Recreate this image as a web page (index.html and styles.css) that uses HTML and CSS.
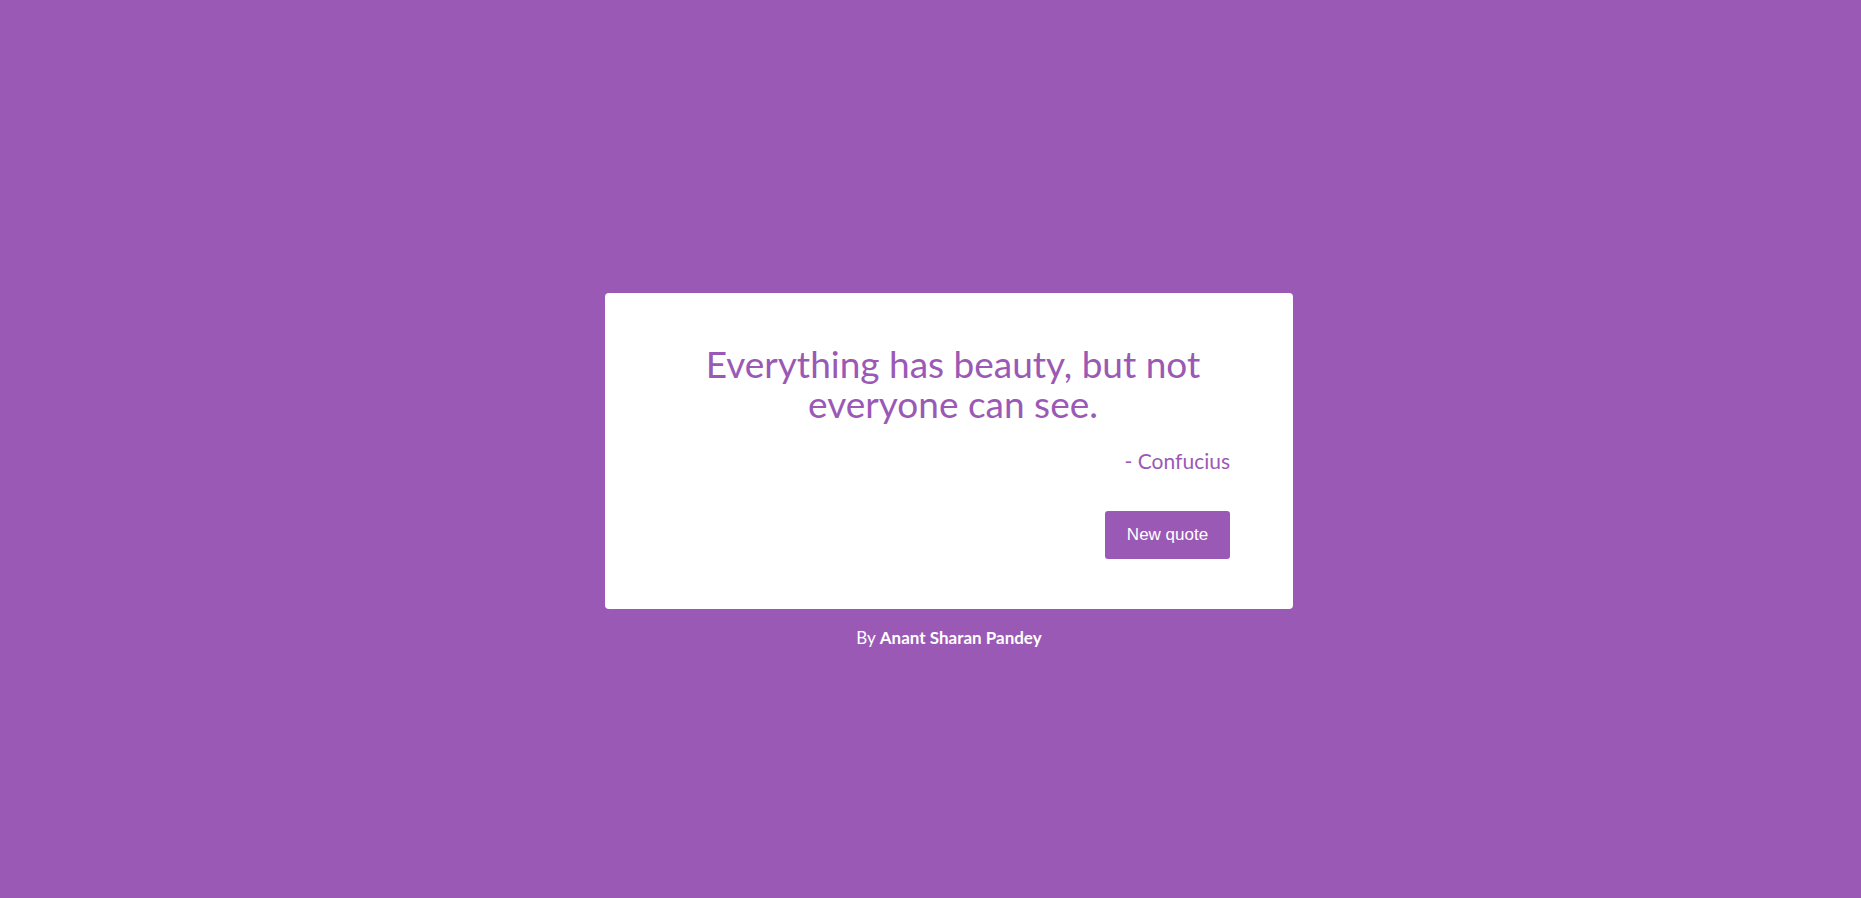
FILE: index.html
```html
<!DOCTYPE html>
<html lang="en">
<head>
<meta charset="utf-8">
<title>Random Quote Machine</title>
<link rel="stylesheet" href="styles.css">
</head>
<body>
<main class="page">
  <section class="card">
    <blockquote class="quote">Everything has beauty, but not everyone can see.</blockquote>
    <p class="author">- Confucius</p>
    <div class="actions">
      <button class="btn" type="button">New quote</button>
    </div>
  </section>
  <p class="credit">By <a class="credit-link" href="#">Anant Sharan Pandey</a></p>
</main>
</body>
</html>
```

FILE: styles.css
```css
html, body {
  margin: 0;
  padding: 0;
  height: 100%;
}
body {
  background: #9b59b6;
  font-family: "Lato", "Open Sans", sans-serif;
  color: #9b59b6;
}
.page {
  display: flex;
  flex-direction: column;
  align-items: center;
  padding-top: 293px;
  padding-left: 37px;
}
.card {
  width: 688px;
  box-sizing: border-box;
  background: #fff;
  border-radius: 4px;
  padding: 51px 63px 50px;
  display: flex;
  flex-direction: column;
}
.quote {
  margin: 0;
  text-align: center;
  font-size: 37px;
  line-height: 40px;
  font-weight: 400;
  padding: 0 20px 0 28px;
}
.author {
  margin: 25px 0 0;
  text-align: right;
  font-size: 21px;
  line-height: 24px;
  font-weight: 400;
}
.actions {
  display: flex;
  justify-content: flex-end;
  margin-top: 38px;
}
.btn {
  width: 125px;
  height: 48px;
  border: none;
  border-radius: 3px;
  background: #9b59b6;
  color: #fff;
  font-family: "Liberation Sans", Arial, sans-serif;
  font-size: 17px;
}
.credit {
  margin: 18px 0 0;
  color: #fff;
  font-size: 17px;
  line-height: 22px;
}
.credit-link {
  color: #fff;
  text-decoration: none;
  font-weight: 700;
}
```
